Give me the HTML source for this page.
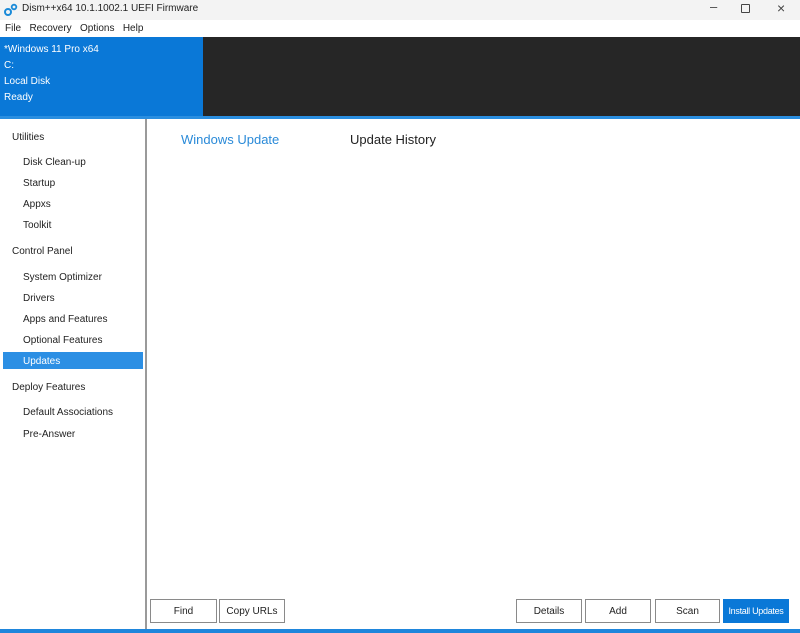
<!DOCTYPE html>
<html><head><style>
body{margin:0;width:800px;height:633px;overflow:hidden;background:#fff;font-family:"Liberation Sans",sans-serif;font-size:10px;color:#222;position:relative}
div{position:absolute;box-sizing:border-box}
.t{white-space:nowrap;line-height:12px}
.btn{top:599px;height:24px;border:1px solid #8a8a8a;background:#fff;text-align:center;line-height:23px;font-size:10px;color:#222;white-space:nowrap;overflow:hidden}
</style></head><body>
<div style="left:0;top:0;width:800px;height:20px;background:#f3f3f3"></div>
<svg style="position:absolute;left:4px;top:3px" width="14" height="14" viewBox="0 0 14 14"><circle cx="4" cy="9" r="3" fill="none" stroke="#1a8ad8" stroke-width="2"/><circle cx="10" cy="4" r="2.3" fill="none" stroke="#1a8ad8" stroke-width="1.8"/></svg>
<div class="t" style="left:22px;top:3px">Dism++x64 10.1.1002.1 UEFI Firmware</div>
<div class="t" style="left:710px;top:1px;font-size:13px;color:#444">–</div>
<div style="left:741px;top:4px;width:9px;height:9px;border:1.3px solid #444;border-radius:1px"></div>
<div class="t" style="left:777px;top:2px;font-size:14px;color:#444">×</div>
<div class="t" style="left:5px;top:23px">File&nbsp;&nbsp;&nbsp;Recovery&nbsp;&nbsp;&nbsp;Options&nbsp;&nbsp;&nbsp;Help</div>
<div style="left:0;top:37px;width:800px;height:81px;background:#262626"></div>
<div style="left:0;top:37px;width:203px;height:81px;background:#0a78d7"></div>
<div style="left:0;top:116px;width:800px;height:3px;background:#2a8ee0"></div>
<div class="t" style="left:4px;top:44px;color:#fff">*Windows 11 Pro x64</div>
<div class="t" style="left:4px;top:60px;color:#fff">C:</div>
<div class="t" style="left:4px;top:76px;color:#fff">Local Disk</div>
<div class="t" style="left:4px;top:92px;color:#fff">Ready</div>
<div style="left:145px;top:119px;width:2px;height:511px;background:#9a9a9a"></div>
<div class="t" style="left:12px;top:132px">Utilities</div>
<div class="t" style="left:23px;top:157px">Disk Clean-up</div>
<div class="t" style="left:23px;top:178px">Startup</div>
<div class="t" style="left:23px;top:199px">Appxs</div>
<div class="t" style="left:23px;top:220px">Toolkit</div>
<div class="t" style="left:12px;top:246px">Control Panel</div>
<div class="t" style="left:23px;top:272px">System Optimizer</div>
<div class="t" style="left:23px;top:293px">Drivers</div>
<div class="t" style="left:23px;top:314px">Apps and Features</div>
<div class="t" style="left:23px;top:335px">Optional Features</div>
<div style="left:3px;top:352px;width:140px;height:17px;background:#2c8fe4"></div>
<div class="t" style="left:23px;top:356px;color:#fff">Updates</div>
<div class="t" style="left:12px;top:382px">Deploy Features</div>
<div class="t" style="left:23px;top:407px">Default Associations</div>
<div class="t" style="left:23px;top:429px">Pre-Answer</div>
<div class="t" style="left:181px;top:132px;font-size:13px;line-height:15px;color:#2a8ad8">Windows Update</div>
<div class="t" style="left:350px;top:132px;font-size:13px;line-height:15px;color:#222">Update History</div>
<div class="btn" style="left:150px;width:67px">Find</div>
<div class="btn" style="left:219px;width:66px">Copy URLs</div>
<div class="btn" style="left:516px;width:66px">Details</div>
<div class="btn" style="left:585px;width:66px">Add</div>
<div class="btn" style="left:655px;width:65px">Scan</div>
<div class="btn" style="left:723px;width:66px;background:#0a78d7;border-color:#0a78d7;color:#fff;font-size:9px;letter-spacing:-0.3px">Install Updates</div>
<div style="left:0;top:629px;width:800px;height:4px;background:#1f86dc"></div>
</body></html>
